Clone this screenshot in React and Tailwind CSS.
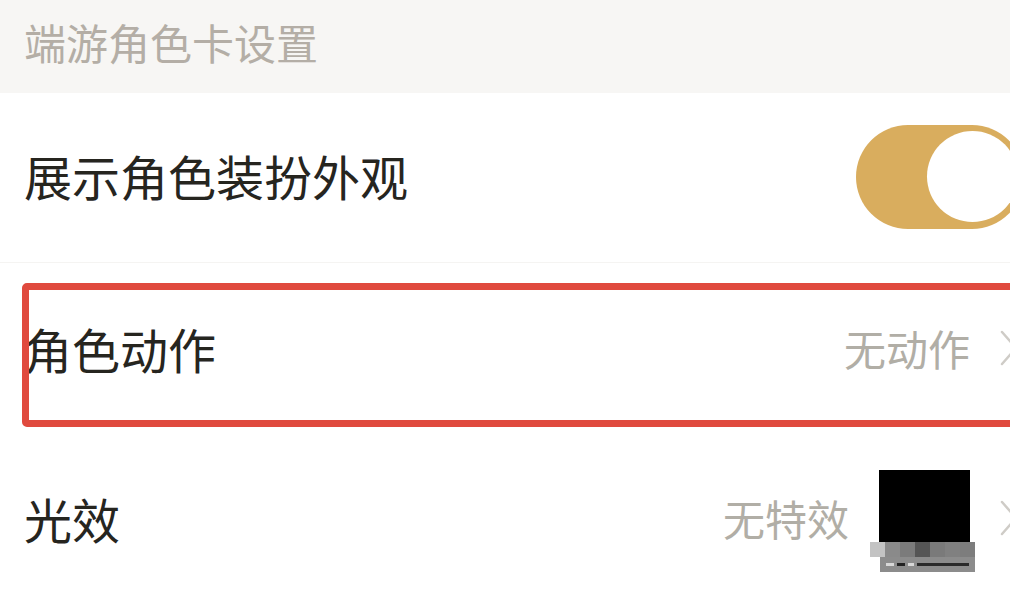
export default function App() {
  return (
    <div className="relative h-[596px] w-[1010px] overflow-hidden bg-white font-['Noto_Sans_CJK_SC',sans-serif]">
      <div className="flex h-[93px] items-center bg-[#f7f6f4] pb-[10px] pl-[24px]">
        <span className="text-[42px] leading-none text-[#b4aea6]">端游角色卡设置</span>
      </div>

      <div className="flex h-[170px] items-center justify-between border-b border-[#f5f4f2] pb-[6px] pl-[24px]">
        <span className="text-[48px] leading-none text-[#26251f]">展示角色装扮外观</span>
        <Toggle />
      </div>

      <div className="flex h-[170px] items-center justify-between pl-[24px]">
        <span className="text-[48px] leading-none text-[#26251f]">角色动作</span>
        <div className="flex items-center">
          <span className="text-[42px] leading-none text-[#b1aea6]">无动作</span>
          <Chevron className="ml-[30px]" />
        </div>
      </div>

      <div className="flex h-[170px] items-center justify-between pl-[24px]">
        <span className="text-[48px] leading-none text-[#26251f]">光效</span>
        <div className="flex items-center">
          <span className="text-[42px] leading-none text-[#b1aea6]">无特效</span>
          <Censor />
          <Chevron className="ml-[25px]" />
        </div>
      </div>

      {/* red annotation box */}
      <div className="absolute left-[22px] top-[283px] h-[144px] w-[1020px] rounded-[5px] border-[7px] border-[#e04a3e]" />
    </div>
  );
}

function Toggle() {
  return (
    <div className="-mr-[14px] mt-[4px] flex h-[104px] w-[168px] items-center justify-end rounded-full bg-[#d9ad5e] pr-[6px]">
      <div className="h-[91px] w-[91px] rounded-full bg-white" />
    </div>
  );
}

function Chevron({ className }) {
  return (
    <svg className={`-mr-[10px] ${className}`} width="20" height="40" viewBox="0 0 20 40" fill="none">
      <path d="M2 4 L16 20 L2 36" stroke="#cfccc7" strokeWidth="2.5" strokeLinecap="round" strokeLinejoin="round" />
    </svg>
  );
}

function Censor() {
  const cells = ['#c3c3c3', '#8a8a8a', '#7b7b7b', '#555555', '#7a7a7a', '#808080', '#7d7d7d'];
  return (
    <div className="ml-[21px] mt-[6px] flex flex-col">
      <div className="ml-[9px] h-[72px] w-[91px] bg-black" />
      <div className="flex">
        {cells.map((c, i) => (
          <div key={i} className="h-[15px] w-[15px]" style={{ backgroundColor: c }} />
        ))}
      </div>
      <div className="ml-[10px] flex h-[15px] w-[95px] items-center gap-[3px] bg-[#8c8c8c] px-[6px]">
        <div className="h-[3px] w-[8px] bg-[#d8d8d8]" />
        <div className="h-[3px] w-[8px] bg-[#222]" />
        <div className="h-[3px] w-[6px] bg-[#d8d8d8]" />
        <div className="h-[3px] flex-1 bg-[#2a2a2a]" />
      </div>
    </div>
  );
}
